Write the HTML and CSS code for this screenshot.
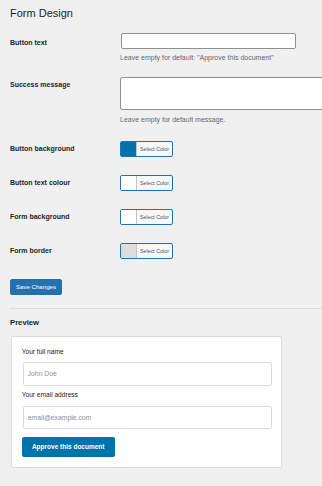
FILE: index.html
```html
<!DOCTYPE html>
<html>
<head>
<meta charset="utf-8">
<link rel="stylesheet" href="styles.css">
</head>
<body>
<div class="wrap">
  <h2 class="title">Form Design</h2>

  <div class="row row-text">
    <div class="label label-text">Button text</div>
    <div class="field">
      <input class="text-input" type="text">
      <p class="desc desc-1">Leave empty for default: "Approve this document"</p>
    </div>
  </div>

  <div class="row row-area">
    <div class="label label-area">Success message</div>
    <div class="field">
      <textarea class="text-area"></textarea>
      <p class="desc desc-2">Leave empty for default message.</p>
    </div>
  </div>

  <div class="color-rows">
    <div class="color-row">
      <div class="label">Button background</div>
      <button class="color-btn"><span class="swatch swatch-blue"></span><span class="color-text">Select Color</span></button>
    </div>
    <div class="color-row">
      <div class="label">Button text colour</div>
      <button class="color-btn"><span class="swatch swatch-white"></span><span class="color-text">Select Color</span></button>
    </div>
    <div class="color-row">
      <div class="label">Form background</div>
      <button class="color-btn"><span class="swatch swatch-white"></span><span class="color-text">Select Color</span></button>
    </div>
    <div class="color-row">
      <div class="label">Form border</div>
      <button class="color-btn"><span class="swatch swatch-gray"></span><span class="color-text">Select Color</span></button>
    </div>
  </div>

  <button class="save-btn">Save Changes</button>

  <hr class="sep">

  <h3 class="preview-title">Preview</h3>

  <div class="card">
    <div class="card-label">Your full name</div>
    <div class="card-input">John Doe</div>
    <div class="card-label card-label-2">Your email address</div>
    <div class="card-input">email@example.com</div>
    <button class="approve-btn">Approve this document</button>
  </div>
</div>
</body>
</html>
```

FILE: styles.css
```css
html, body {
  margin: 0;
  padding: 0;
  background: #f0f0f1;
  overflow: hidden;
}

body {
  font-family: "Liberation Sans", Arial, sans-serif;
  color: #1d2327;
}

.wrap {
  padding-left: 10px;
  overflow: hidden;
}

.title {
  margin: 6px 0 0;
  font-size: 11px;
  line-height: 14px;
  font-weight: normal;
  color: #1d2327;
}

.row {
  display: flex;
}

.row-text {
  margin-top: 13px;
}

.row-area {
  margin-top: 15.3px;
}

.label {
  width: 110px;
  flex: none;
  font-size: 7px;
  line-height: 9px;
  font-weight: bold;
  color: #1d2327;
}

.label-text {
  padding-top: 4.7px;
}

.label-area {
  padding-top: 3.2px;
}

.field {
  flex: 1;
  min-width: 0;
}

.text-input {
  display: block;
  box-sizing: border-box;
  margin: 0 0 0 1px;
  width: 175px;
  height: 16px;
  border: 1px solid #8c8f94;
  border-radius: 2px;
  background: #fff;
  padding: 0;
}

.text-area {
  display: block;
  box-sizing: border-box;
  margin: 0;
  width: 230px;
  height: 33px;
  border: 1px solid #8c8f94;
  border-radius: 2px;
  background: #fff;
  resize: none;
  padding: 0;
}

.desc {
  margin: 0;
  font-size: 7px;
  line-height: 9px;
  color: #646970;
  white-space: nowrap;
}

.desc-1 {
  margin-top: 3.7px;
}

.desc-2 {
  margin-top: 5.5px;
}

.color-rows {
  margin-top: 7.5px;
}

.color-row {
  display: flex;
  align-items: center;
  height: 34px;
}

.color-btn {
  display: flex;
  box-sizing: border-box;
  width: 53px;
  height: 16px;
  padding: 0;
  margin: 0;
  border: 1px solid #2271b1;
  border-radius: 2px;
  background: #f6f7f7;
  overflow: hidden;
}

.swatch {
  display: block;
  width: 15px;
  height: 100%;
  border-right: 1px solid #c3c4c7;
  flex: none;
}

.swatch-blue {
  background: #0073aa;
}

.swatch-white {
  background: #ffffff;
}

.swatch-gray {
  background: #dddddd;
}

.color-text {
  flex: 1;
  font-family: "Liberation Sans", Arial, sans-serif;
  font-size: 5.3px;
  line-height: 14px;
  color: #50575e;
  text-align: center;
  white-space: nowrap;
}

.save-btn {
  display: block;
  margin: 11px 0 0;
  box-sizing: border-box;
  width: 52px;
  height: 16px;
  padding: 0;
  border: 1px solid #2271b1;
  border-radius: 2px;
  background: #2271b1;
  color: #fff;
  font-family: "Liberation Sans", Arial, sans-serif;
  font-size: 6.1px;
  line-height: 14px;
  text-align: center;
  white-space: nowrap;
}

.sep {
  margin: 13px 0 0;
  border: 0;
  height: 1px;
  background: #dcdcde;
}

.preview-title {
  margin: 9px 0 0;
  font-size: 7.7px;
  line-height: 10px;
  font-weight: bold;
  color: #1d2327;
}

.card {
  margin-top: 8px;
  margin-left: 0.7px;
  box-sizing: border-box;
  width: 271px;
  background: #fff;
  border: 1px solid #dcdcde;
  border-radius: 2px;
  padding: 10px 10px 10px;
}

.card-label {
  font-size: 6.6px;
  line-height: 9px;
  color: #1d2327;
}

.card-label-2 {
  margin-top: 4.5px;
}

.card-input {
  box-sizing: border-box;
  margin: 6.5px 0 0 1px;
  width: 249.5px;
  height: 23.5px;
  border: 1px solid #dcdcde;
  border-radius: 2px;
  background: #fff;
  padding-left: 4px;
  font-size: 6.8px;
  line-height: 21.5px;
  color: #8a8f98;
}

.approve-btn {
  display: block;
  margin: 7.5px 0 0;
  box-sizing: border-box;
  width: 93px;
  height: 20px;
  padding: 0;
  border: 0;
  border-radius: 2px;
  background: #0073aa;
  color: #fff;
  font-family: "Liberation Sans", Arial, sans-serif;
  font-size: 6.5px;
  font-weight: bold;
  line-height: 20px;
  text-align: center;
  white-space: nowrap;
}
```
